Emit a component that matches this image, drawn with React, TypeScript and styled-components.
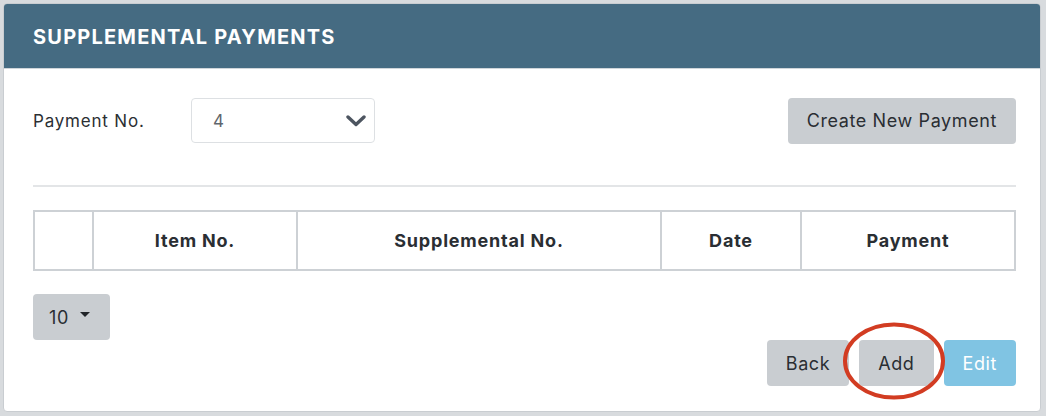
import styled, { createGlobalStyle } from "styled-components";

const GlobalStyle = createGlobalStyle`
  html, body {
    margin: 0;
    padding: 0;
    background: #d8dbde;
  }
  body {
    font-family: Inter, "Liberation Sans", sans-serif;
    color: #212529;
    letter-spacing: 0.6px;
  }
`;

const Card = styled.div`
  margin: 3px 5px 4px 3px;
  height: 409px;
  box-sizing: border-box;
  background: #fff;
  border: 1px solid #c9cdd1;
  border-radius: 4px;
  display: flex;
  flex-direction: column;
  overflow: hidden;
`;

const Header = styled.div`
  height: 65px;
  flex-shrink: 0;
  box-sizing: border-box;
  background: #456b82;
  border-bottom: 1px solid #cfd5da;
  display: flex;
  align-items: center;
  padding-left: 29px;
  padding-top: 1px;
  color: #fff;
  font-size: 20px;
  font-weight: 700;
  letter-spacing: 1.2px;
`;

const Body = styled.div`
  flex: 1;
  display: flex;
  flex-direction: column;
  padding: 29px 24px 0 29px;
`;

const FormRow = styled.div`
  display: flex;
  align-items: center;
  height: 45px;
`;

const Label = styled.div`
  width: 158px;
  font-size: 17px;
  letter-spacing: 0.8px;
  color: #2b2f33;
`;

const SelectBox = styled.div`
  width: 184px;
  height: 45px;
  box-sizing: border-box;
  border: 1px solid #dde0e3;
  border-radius: 4px;
  display: flex;
  align-items: center;
  justify-content: space-between;
  padding: 0 8px 0 21px;
  font-size: 17px;
  color: #5f666d;
`;

const Button = styled.button<{ $variant?: "info" }>`
  height: 46px;
  box-sizing: border-box;
  border: none;
  border-radius: 4px;
  padding: 0 19px;
  font-family: inherit;
  font-size: 18px;
  letter-spacing: 0.6px;
  background: ${(p) => (p.$variant === "info" ? "#80c4e3" : "#c9cdd1")};
  color: ${(p) => (p.$variant === "info" ? "#fff" : "#2a2e33")};
  display: inline-flex;
  align-items: center;
  gap: 10px;
`;

const Spacer = styled.div`
  flex: 1;
`;

const Divider = styled.hr`
  margin: 42px 0 23px;
  border: none;
  border-top: 2px solid #e3e5e7;
`;

const Table = styled.table`
  width: 100%;
  border-collapse: collapse;
  table-layout: fixed;
`;

const Th = styled.th<{ $w?: number }>`
  width: ${(p) => (p.$w ? `${p.$w}px` : "auto")};
  height: 57px;
  border: 2px solid #cdd1d5;
  font-size: 18px;
  font-weight: 700;
  color: #2a2e33;
  text-align: center;
  padding: 0;
  letter-spacing: 0.8px;
`;

const PageSize = styled(Button)`
  margin-top: 23px;
  align-self: flex-start;
  width: 77px;
  padding: 0 0 0 16px;
  gap: 11px;
`;

const Caret = styled.span`
  width: 0;
  height: 0;
  border-left: 5px solid transparent;
  border-right: 5px solid transparent;
  border-top: 5px solid #212529;
  margin-top: -6px;
`;

const Actions = styled.div`
  display: flex;
  justify-content: flex-end;
  gap: 10px;
`;

const Highlight = styled.div`
  position: relative;
  display: flex;
`;

const Ring = styled.svg`
  position: absolute;
  left: -17px;
  top: -19px;
  width: 104px;
  height: 80px;
  pointer-events: none;
`;

const columns: [string, number | undefined][] = [
  ["", 57],
  ["Item No.", 202],
  ["Supplemental No.", 362],
  ["Date", 138],
  ["Payment", undefined],
];

export default function App() {
  return (
    <>
      <GlobalStyle />
      <Card>
        <Header>SUPPLEMENTAL PAYMENTS</Header>
        <Body>
          <FormRow>
            <Label>Payment No.</Label>
            <SelectBox>
              <span>4</span>
              <svg width="20" height="12" viewBox="0 0 20 12">
                <polyline points="2,2 10,9.5 18,2" fill="none" stroke="#4d5560" strokeWidth="3.4" strokeLinecap="round" strokeLinejoin="round" />
              </svg>
            </SelectBox>
            <Spacer />
            <Button>Create New Payment</Button>
          </FormRow>
          <Divider />
          <Table>
            <thead>
              <tr>
                {columns.map(([name, w]) => (
                  <Th key={name || "sel"} $w={w}>{name}</Th>
                ))}
              </tr>
            </thead>
          </Table>
          <PageSize>
            10 <Caret />
          </PageSize>
          <Actions>
            <Button>Back</Button>
            <Highlight>
              <Button>Add</Button>
              <Ring viewBox="0 0 104 80">
                <ellipse cx="52" cy="40" rx="49" ry="36.5" fill="none" stroke="#d23c22" strokeWidth="4" />
              </Ring>
            </Highlight>
            <Button $variant="info">Edit</Button>
          </Actions>
        </Body>
      </Card>
    </>
  );
}
